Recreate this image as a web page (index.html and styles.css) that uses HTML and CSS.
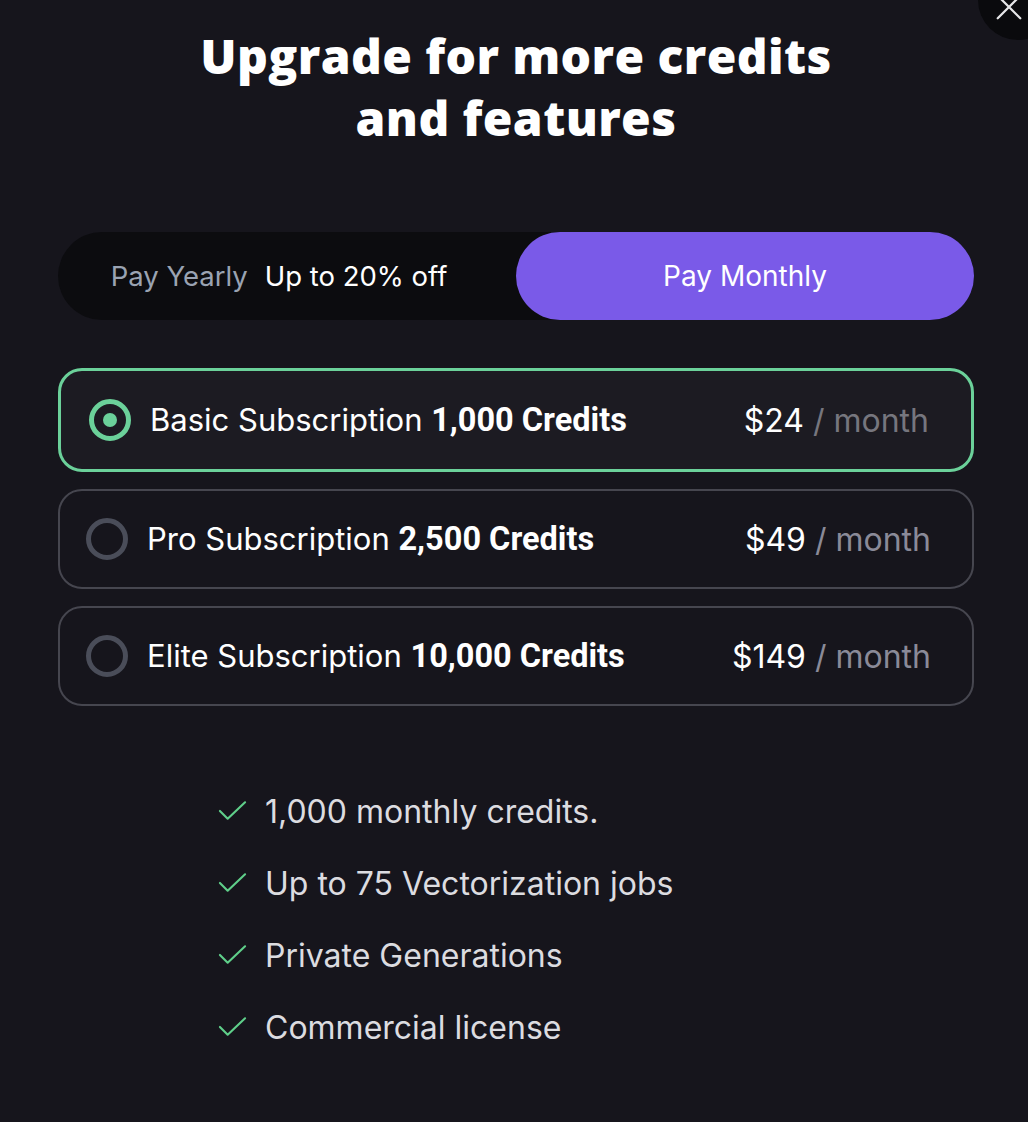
FILE: index.html
```html
<!DOCTYPE html>
<html lang="en">
<head>
<meta charset="utf-8">
<title>Upgrade</title>
<link rel="stylesheet" href="styles.css">
</head>
<body>
<div class="modal">
  <button class="close" aria-label="Close">
    <svg width="30" height="30" viewBox="0 0 30 30"><path d="M2 28 L28 2 M2 2 L28 28" stroke="#e6e6e8" stroke-width="2.6" stroke-linecap="round" fill="none"/></svg>
  </button>
  <h1 class="title">Upgrade for more credits<br>and features</h1>

  <div class="toggle">
    <div class="toggle-opt yearly"><span class="muted">Pay Yearly</span><span class="off">Up to 20% off</span></div>
    <div class="toggle-opt monthly">Pay Monthly</div>
  </div>

  <div class="plans">
    <div class="plan selected">
      <span class="radio on"></span>
      <span class="plan-name">Basic Subscription <b>1,000 Credits</b></span>
      <span class="price">$24 <span class="per">/ month</span></span>
    </div>
    <div class="plan">
      <span class="radio"></span>
      <span class="plan-name">Pro Subscription <b>2,500 Credits</b></span>
      <span class="price">$49 <span class="per">/ month</span></span>
    </div>
    <div class="plan">
      <span class="radio"></span>
      <span class="plan-name">Elite Subscription <b>10,000 Credits</b></span>
      <span class="price">$149 <span class="per">/ month</span></span>
    </div>
  </div>

  <ul class="features">
    <li><svg class="check" viewBox="0 0 30 24"><path d="M2 12 L10 20 L28 3" stroke="#5fcf8a" stroke-width="2.2" fill="none" stroke-linecap="round" stroke-linejoin="round"/></svg>1,000 monthly credits.</li>
    <li><svg class="check" viewBox="0 0 30 24"><path d="M2 12 L10 20 L28 3" stroke="#5fcf8a" stroke-width="2.2" fill="none" stroke-linecap="round" stroke-linejoin="round"/></svg>Up to 75 Vectorization jobs</li>
    <li><svg class="check" viewBox="0 0 30 24"><path d="M2 12 L10 20 L28 3" stroke="#5fcf8a" stroke-width="2.2" fill="none" stroke-linecap="round" stroke-linejoin="round"/></svg>Private Generations</li>
    <li><svg class="check" viewBox="0 0 30 24"><path d="M2 12 L10 20 L28 3" stroke="#5fcf8a" stroke-width="2.2" fill="none" stroke-linecap="round" stroke-linejoin="round"/></svg>Commercial license</li>
  </ul>
</div>
</body>
</html>
```

FILE: styles.css
```css
* { box-sizing: border-box; }
html, body {
  margin: 0;
  padding: 0;
  background: #16151c;
  height: 100%;
}
body {
  font-family: Inter, "Noto Sans", sans-serif;
  color: #ffffff;
  overflow: hidden;
}
.modal {
  position: relative;
  padding: 25px 54px 0 58px;
  min-height: 1122px;
}
.close {
  position: absolute;
  top: -40px;
  right: -30px;
  width: 80px;
  height: 80px;
  border-radius: 50%;
  background: #0a0a0d;
  border: 0;
  padding: 0;
  display: flex;
  align-items: flex-end;
  justify-content: flex-start;
}
.close svg {
  width: 26px;
  height: 26px;
  margin: 0 0 20px 18px;
}
.title {
  margin: 0;
  text-align: center;
  font-family: "Open Sans", Lato, sans-serif;
  font-weight: 800;
  font-size: 48px;
  line-height: 62px;
  letter-spacing: 0.4px;
}
.toggle {
  margin-top: 83px;
  height: 88px;
  border-radius: 44px;
  background: #0c0c0f;
  display: grid;
  grid-template-columns: 1fr 1fr;
}
.toggle-opt {
  display: flex;
  align-items: center;
  justify-content: center;
  font-size: 27.5px;
  border-radius: 44px;
}
.yearly { padding-right: 16px; }
.toggle-opt .muted { color: #9aa3b2; margin-right: 17px; }
.toggle-opt .off { color: #fff; }
.monthly { background: #7a5ae8; color: #fff; font-size: 28px; }

.plans {
  margin-top: 48px;
  display: flex;
  flex-direction: column;
  gap: 17px;
}
.plan {
  height: 100px;
  border: 2px solid #46464f;
  border-radius: 24px;
  display: flex;
  align-items: center;
  padding: 0 41px 0 26px;
  background: #16151c;
}
.plan.selected {
  height: 104px;
  border: 3px solid #6bd19a;
  background: #1c1b22;
  padding-left: 28px;
  padding-right: 42px;
}
.radio {
  width: 42px;
  height: 42px;
  border-radius: 50%;
  border: 5px solid #4a4d59;
  flex: none;
  margin-right: 19px;
  display: flex;
  align-items: center;
  justify-content: center;
}
.radio.on { border-color: #6bd19a; margin-right: 19px; }
.radio.on::after {
  content: "";
  width: 14px;
  height: 14px;
  border-radius: 50%;
  background: #6bd19a;
}
.plan-name {
  font-size: 31px;
  flex: 1;
}
.plan-name b {
  font-family: Roboto, Inter, sans-serif;
  font-weight: 700;
  font-size: 32.5px;
}
.price { font-size: 32px; }
.per { color: #8a8a98; }
.selected .per { color: #76767e; }

.features {
  list-style: none;
  margin: 69px 0 0 0;
  padding: 0 0 0 160px;
}
.features li {
  display: flex;
  align-items: center;
  height: 72px;
  font-size: 32px;
  color: #dcdce0;
}
.check {
  width: 29px;
  height: 24px;
  margin-right: 18px;
  flex: none;
}
```
